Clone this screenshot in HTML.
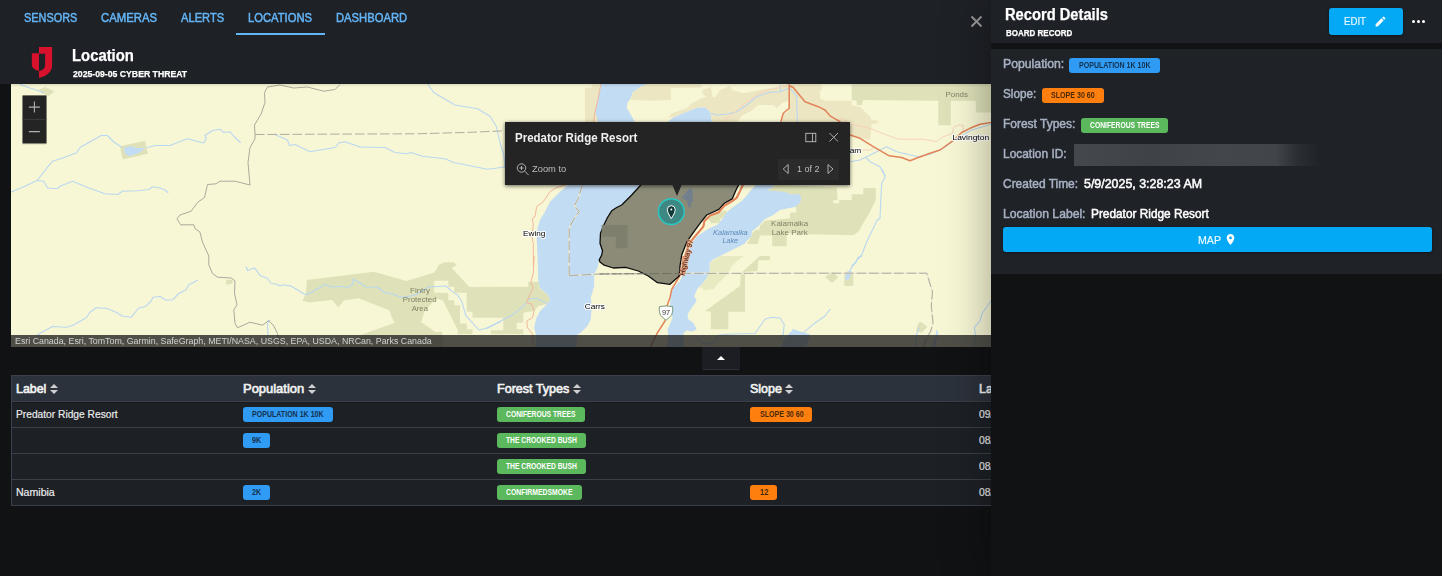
<!DOCTYPE html>
<html lang="en">
<head>
<meta charset="utf-8">
<title>Location</title>
<style>
*{box-sizing:border-box;margin:0;padding:0}
html,body{width:1442px;height:576px;overflow:hidden;background:#111214;font-family:"Liberation Sans",sans-serif}
#app{position:relative;width:1442px;height:576px;overflow:hidden;background:#111214}
.t{position:absolute;white-space:pre;line-height:20px;transform-origin:0 50%;display:block}
.med{-webkit-text-stroke:0.5px currentColor}
.reg{-webkit-text-stroke:0.2px currentColor}
.bld{-webkit-text-stroke:0.25px currentColor}
.hdt{-webkit-text-stroke:0.65px currentColor}
.abs{position:absolute}
header.top{will-change:transform;position:absolute;left:0;top:0;width:1442px;height:84px;background:#1e2126}
nav.tabs{position:absolute;left:0;top:0;width:991px;height:36px}
.ink{position:absolute;left:236px;top:33px;width:89px;height:2px;background:#64b5f6}
.titlebar{position:absolute;left:0;top:36px;width:991px;height:48px}
.closex{position:absolute;left:970px;top:15px;width:13px;height:13px}
#map{will-change:transform;position:absolute;left:11px;top:84px;width:980px;height:263px;overflow:hidden;background:#f8f7d5}
#map svg{position:absolute;left:0;top:0}
.mshade{position:absolute;left:0;top:0;width:980px;height:3px;background:linear-gradient(rgba(0,0,0,.12),rgba(0,0,0,0))}
.zoomctl{position:absolute;left:11.4px;top:11.4px;width:24.1px;height:48px;background:#242424;box-shadow:0 1px 2px rgba(0,0,0,.3)}
.zoomctl b{position:absolute;left:0;top:23.6px;width:24.1px;height:1px;background:#3c3c3c}
.attr{position:absolute;left:0;top:251px;width:980px;height:12px;background:rgba(36,36,36,.8)}
.popup{position:absolute;left:494px;top:38.25px;width:345px;height:62.3px;background:#242424;box-shadow:0 1px 4px rgba(0,0,0,.6)}
.popup .ptr{position:absolute;left:167.3px;top:62px;width:0;height:0;border-left:5.2px solid transparent;border-right:5.2px solid transparent;border-top:12.6px solid #242424}
.popup .pager{position:absolute;left:273px;top:36.8px;width:61px;height:21.2px;background:#2b2b2b}
.toggle{position:absolute;left:702px;top:347px;width:38px;height:23px;background:#1c1e23;border-bottom:1px solid #2c2f35;border-radius:0 0 2px 2px}
.toggle i{position:absolute;left:15px;top:9px;width:0;height:0;border-left:4.5px solid transparent;border-right:4.5px solid transparent;border-bottom:4.5px solid #fff}
.grid{position:absolute;left:11px;top:375px;width:1420px;height:131px;background:#1d2025;border:1px solid #3a4049}
.grid .hd{position:absolute;left:0;top:0;width:100%;height:25px;background:#2c323b;box-shadow:0 2px 0 #191b1f}
.grid .ln{position:absolute;left:0;width:100%;height:1px;background:#3a4049}
.chip{position:absolute;height:15px;border-radius:3px}
.c-b{background:#2f9bf4}.c-g{background:#5cb85c}.c-o{background:#ff7f0e}
.sort{position:absolute;width:8px;height:11px}
.sort:before,.sort:after{content:"";position:absolute;left:0;width:0;height:0;border-left:4px solid transparent;border-right:4px solid transparent}
.sort:before{top:0;border-bottom:4.5px solid #cfcfcf}
.sort:after{top:6px;border-top:4.5px solid #cfcfcf}
aside.panel{will-change:transform;position:absolute;left:991px;top:0;width:451px;height:576px;background:#111214;box-shadow:0 0 44px rgba(0,0,0,.36)}
.phead{position:absolute;left:0;top:0;width:451px;height:43px;background:#1e2126}
.pbody{position:absolute;left:0;top:49px;width:451px;height:225px;background:#1f2227}
.btn{position:absolute;background:#03a9f4;border-radius:3px;box-shadow:0 1px 3px rgba(0,0,0,.4)}
.redact{position:absolute;left:83px;top:95px;width:246px;height:22px;background:linear-gradient(90deg,#45494d 0%,#3f4347 30%,#43474b 60%,#414549 82%,rgba(50,53,58,.6) 91%,rgba(31,34,39,0) 100%)}
.dots{position:absolute;left:421px;top:20px;width:13px;height:4px}
.dots i{position:absolute;top:0;width:3.4px;height:3.4px;border-radius:50%;background:#fff}

</style>
</head>
<body>
<div id="app">
<header class="top">
<nav class="tabs">
<span class="t med" style="left:24.09px;top:8px;font-size:12.8px;font-weight:400;color:#64b5f6;transform:scaleX(0.8522);">SENSORS</span>
<span class="t med" style="left:101.17px;top:8px;font-size:12.8px;font-weight:400;color:#64b5f6;transform:scaleX(0.8855);">CAMERAS</span>
<span class="t med" style="left:181.27px;top:8px;font-size:12.8px;font-weight:400;color:#64b5f6;transform:scaleX(0.8705);">ALERTS</span>
<span class="t med" style="left:247.98px;top:8px;font-size:12.8px;font-weight:400;color:#64b5f6;transform:scaleX(0.8771);">LOCATIONS</span>
<span class="t med" style="left:335.98px;top:8px;font-size:12.8px;font-weight:400;color:#64b5f6;transform:scaleX(0.8770);">DASHBOARD</span>
<div class="ink"></div>
</nav>
<div class="titlebar" style="top:0;height:84px">
<svg class="abs" style="left:30px;top:44px" width="24" height="36" viewBox="30 44 24 36">
<path d="M38.96 46.9H52.1V65.2Q52.1 74.4 38.96 78V70.96Q45.1 69.8 45.1 65.2V53.76H38.96Z" fill="#d8112d"/>
<path d="M31.85 53.15H38.35L38.96 53.76V70.96Q31.85 69.05 31.85 65.2Z" fill="#d8112d"/>
</svg>
<span class="t bld" style="left:72.35px;top:46px;font-size:15.8px;font-weight:700;color:#fff;transform:scaleX(0.9396);">Location</span>
<span class="t bld" style="left:73.21px;top:64px;font-size:9.9px;font-weight:700;color:#fff;transform:scaleX(0.8789);">2025-09-05 CYBER THREAT</span>
</div>
<svg class="closex" viewBox="0 0 13 13"><path d="M1.5 1.5L11.5 11.5M11.5 1.5L1.5 11.5" stroke="#9a9a9a" stroke-width="1.9" fill="none"/></svg>
</header>

<section id="map">
<svg width="980" height="263" viewBox="11 84 980 263" font-family="'Liberation Sans',sans-serif">
<rect x="11" y="84" width="980" height="263" fill="#f8f7d5"/>
<g fill="#dfe2b9">
<path d="M38.8 89.5 L45.0 87.0 L54.5 91.2 L48.8 96.2 L41.2 92.5Z"/>
<path d="M120.0 146.2 L145.0 140.8 L148.0 153.8 L122.5 159.5Z"/>
<path d="M306.8 280.1 L373.9 271.7 L406.7 281.1 L434.4 272.4 L438.8 265.1 L444.6 262.2 L453.3 262.2 L457.0 265.1 L451.9 268.0 L469.4 287.0 L528.3 286.8 L528.3 281.8 L538.3 281.8 L540.0 288.5 L548.3 295.2 L550.0 300.2 L546.7 304.3 L538.3 306.0 L534.2 311.0 L523.3 312.7 L523.3 322.7 L516.7 322.7 L516.7 329.3 L523.3 329.3 L523.3 334.3 L490.8 334.3 L490.8 330.2 L503.3 330.2 L503.3 317.7 L472.5 317.7 L472.5 311.8 L466.7 311.8 L466.7 292.7 L454.2 292.7 L454.2 286.8 L448.3 286.8 L448.3 280.7 L434.2 280.7 L434.2 292.7 L448.3 292.7 L448.3 300.2 L454.2 300.2 L454.2 305.2 L460.0 305.2 L460.0 323.5 L466.7 323.5 L466.7 329.3 L472.5 329.3 L472.5 334.3 L457.5 334.3 L457.7 334.7 L457.7 330.0 L443.1 300.8 L437.3 298.6 L435.8 299.4 L424.9 310.3 L421.2 322.0 L435.8 332.2 L441.7 331.5 L442.4 334.7 L443.1 347.5 L348.3 347.5 L361.5 334.7 L395.0 322.7 L392.1 318.3 L389.2 310.3 L358.5 298.2 L344.0 300.5 L338.1 307.4 L332.3 300.1 L309.0 302.6 L302.4 300.8 L306.0 293.5Z"/>
<path d="M226.2 279.8 L232.5 279.8 L232.5 283.5 L226.2 284.8Z"/>
<path d="M836.7 187.5 L837.5 200.0 L833.3 200.3 L833.3 203.3 L839.2 203.3 L839.2 200.0 L851.7 200.0 L851.7 194.2 L863.3 194.2 L863.3 188.0 L875.8 188.0 L875.8 200.0 L868.3 215.0 L863.3 223.3 L858.3 231.7 L853.3 235.3 L808.3 234.2 L787.5 233.3 L786.7 233.3 L786.7 246.3 L772.2 246.3 L772.2 235.6 L760.0 235.6 L757.8 244.0 L746.7 244.0 L751.1 236.7 L752.2 233.3 L755.6 230.0 L759.4 229.4 L760.0 225.6 L765.6 220.6 L790.0 218.3 L790.0 212.8 L796.7 212.2 L795.6 206.7 L801.3 197.8 L791.1 194.4 L766.7 190.6 L772.2 187.8 L774.4 184.4Z"/>
<path d="M707.8 217.8 L725.6 210.0 L726.7 212.2 L723.3 217.8 L720.0 218.9 L720.0 222.2 L716.7 223.3 L711.1 223.3Z"/>
<path d="M770.0 256.0 L770.0 260.2 L758.3 260.2 L757.5 271.0 L745.0 271.8 L745.0 311.8 L728.3 311.8 L728.3 329.3 L710.8 329.3 L710.8 311.8 L705.0 311.0 L740.0 286.0 L740.8 274.3 L743.3 271.0 L760.0 256.0Z"/>
<path d="M851.7 84.2 L991.3 84.2 L991.3 112.5 L975.8 112.5 L975.8 100.8 L950.8 100.8 L950.8 125.3 L938.3 125.3 L938.3 100.8 L863.3 100.0 L861.7 105.0 L856.7 105.0 L856.7 100.8 L851.7 100.0Z"/>
<path d="M832.0 271.3 L838.3 277.2 L832.0 283.0 L825.3 277.2Z"/>
<path d="M844.2 274.3 L853.3 274.3 L853.3 286.0 L844.2 286.0Z"/>
<path d="M920.8 321.8 L927.5 326.8 L921.7 332.7 L915.8 331.0 L918.3 322.7Z"/>
</g>
<g fill="#e8ebc2">
<path d="M709.2 263.5 L720.0 256.0 L743.3 256.0 L731.7 266.0 L728.3 272.7 L713.3 289.3 L705.0 290.2 L699.2 286.8 L706.7 277.7 L710.0 270.2Z"/>
</g>
<g fill="#ede6c2">
<path d="M585.0 87.5 L591.7 87.5 L591.7 84.2 L601.7 84.2 L600.0 122.5 L585.0 122.5Z"/>
<path d="M630.8 100.0 L632.5 92.5 L638.3 88.3 L646.7 84.2 L701.7 84.2 L701.7 87.5 L670.8 88.3 L670.8 100.0 L651.7 100.8Z"/>
<path d="M702.5 90.0 L710.8 86.7 L712.5 96.7 L715.0 97.5 L720.0 90.0 L730.8 85.8 L731.7 90.0 L743.3 93.3 L776.7 86.7 L788.3 84.2 L820.0 84.2 L822.5 87.5 L820.0 91.7 L820.0 98.3 L825.0 100.8 L851.7 100.8 L851.7 105.8 L860.0 106.7 L870.0 116.7 L871.7 120.0 L878.3 120.8 L877.5 123.3 L871.7 124.2 L870.0 140.0 L858.3 138.3 L850.0 135.0 L850.0 122.5 L733.3 122.5 L712.0 122.5 L710.8 115.0 L709.2 110.8 L705.0 107.5 L698.3 107.5 L686.7 111.7 L673.3 117.5 L668.3 117.5 L671.7 113.3 L686.7 108.3 L691.7 103.3 L701.7 98.3 L706.7 96.7 L702.5 94.2Z"/>
</g>
<g fill="#f8f7d5">
<path d="M758.3 105.0 L773.3 105.0 L776.7 108.3 L781.7 103.3 L788.3 100.8 L788.3 111.7 L783.3 114.2 L780.8 122.5 L736.7 122.5 L741.7 115.8 L751.7 110.8Z"/>
</g>
<g fill="#c2dcf3">
<path d="M600.8 84.0 L599.0 93.3 L596.7 103.3 L595.5 113.3 L597.5 119.0 L599.0 125.0 L590.0 170.0 L568.3 184.7 L560.0 191.7 L550.0 201.7 L545.0 211.7 L540.0 220.0 L537.5 228.3 L536.7 240.0 L537.5 256.0 L538.3 281.0 L540.0 288.0 L548.3 295.2 L550.0 300.0 L546.7 304.5 L540.0 311.0 L536.0 319.0 L534.2 327.7 L535.8 334.3 L535.8 347.0 L576.7 347.0 L576.7 335.2 L581.7 331.8 L587.5 326.0 L590.8 319.3 L591.7 306.0 L590.8 297.7 L594.2 286.0 L594.2 274.3 L597.5 267.7 L599.2 260.0 L601.7 255.0 L602.5 250.8 L600.0 243.3 L600.5 233.3 L604.2 224.2 L607.5 217.5 L611.7 210.8 L616.7 207.5 L621.7 205.0 L631.7 195.0 L641.7 184.7 L640.0 150.0 L635.0 122.5 L633.3 119.0 L630.0 113.3 L626.7 107.5 L627.5 102.5 L630.8 98.3 L632.5 92.5 L638.3 88.3 L646.7 84.0Z"/>
<path d="M665.0 124.0 L673.3 117.5 L686.7 111.7 L698.3 107.5 L705.0 107.5 L709.0 110.8 L710.8 115.0 L712.0 124.0Z"/>
<path d="M756.7 184.0 L751.1 190.0 L746.7 195.6 L742.2 200.6 L732.2 207.8 L726.7 212.2 L723.3 217.8 L717.8 224.4 L707.8 228.9 L696.7 236.7 L691.1 244.0 L689.0 250.0 L687.5 256.0 L684.0 262.0 L683.3 272.7 L680.0 281.0 L673.3 287.7 L670.8 294.3 L670.0 306.0 L672.5 317.7 L670.0 324.3 L667.5 329.3 L668.3 335.0 L666.7 347.0 L684.0 347.0 L683.3 333.5 L686.7 330.2 L691.7 331.8 L696.7 329.3 L693.3 322.7 L688.3 319.3 L687.5 314.3 L691.7 307.7 L696.7 301.0 L694.2 296.0 L697.5 288.5 L701.7 284.3 L706.7 277.7 L710.0 270.2 L709.2 263.5 L713.3 259.3 L720.0 256.0 L727.0 252.5 L735.0 248.5 L744.4 244.0 L746.7 241.1 L751.1 236.7 L752.2 231.1 L757.8 226.7 L764.4 219.4 L772.2 215.6 L780.0 210.0 L795.6 206.7 L800.0 202.8 L801.3 197.8 L799.4 194.2 L791.1 194.4 L784.4 191.7 L766.7 190.6 L772.2 187.8 L774.4 184.0Z"/>
<path d="M123.8 147.5 L131.2 146.2 L136.2 148.0 L145.0 148.0 L140.0 152.5 L130.0 156.2 L125.0 153.8Z"/>
<path d="M845.0 279.3 L846.7 271.8 L850.8 270.2 L851.7 272.7 L848.3 280.2Z"/>
<path d="M792.5 329.0 L807.5 334.0 L803.3 346.8 L783.3 346.8 L792.5 334.3Z"/>
<path d="M936.7 329.0 L938.3 332.7 L935.0 346.8 L931.7 346.8 L935.8 334.3Z"/>
<path d="M793.3 329.3 L800.0 331.8 L810.0 334.3 L806.7 346.8 L781.7 346.8 L783.3 339.3Z"/>
</g>
<g fill="none" stroke="#b9d7f0" stroke-width="1.1" stroke-linejoin="round" stroke-linecap="round">
<path d="M20.0 84.5 L30.0 88.0 L40.0 91.2 L43.8 93.0"/>
<path d="M11.2 192.0 L25.0 186.2 L37.0 180.5 L52.5 161.2 L62.5 158.0 L76.2 153.0 L80.0 147.5 L101.2 135.5 L107.5 135.5 L113.8 142.0 L121.2 147.0"/>
<path d="M147.5 147.5 L155.0 145.5 L170.0 145.5 L187.5 138.8 L203.8 143.0 L206.2 138.8 L205.0 135.5 L212.5 130.5 L220.0 129.2 L223.8 132.5 L230.0 131.8 L235.0 137.5 L240.5 142.5"/>
<path d="M37.0 180.5 L43.8 181.2 L47.5 188.0 L57.5 188.8 L60.0 186.2 L72.5 181.2 L87.5 187.5 L105.0 193.8 L117.5 194.5 L122.5 191.2 L137.5 190.8 L148.8 189.5 L152.5 186.8 L160.0 188.0 L165.0 190.0 L168.0 192.5"/>
<path d="M275.0 134.5 L287.5 140.0 L289.5 145.5 L295.0 144.5 L310.0 151.8 L335.0 147.5 L338.8 143.0 L345.0 141.8 L360.0 147.0"/>
<path d="M37.5 334.8 L52.5 326.5 L66.2 327.2 L72.5 325.5 L86.2 317.8 L90.0 312.2 L96.2 307.8 L107.5 308.5 L117.5 313.0 L121.8 316.0 L131.2 317.2 L138.8 308.0 L145.0 306.8 L151.2 301.0 L153.0 297.2 L160.0 296.5 L166.2 300.2 L172.5 299.8 L178.8 293.5 L186.2 289.8 L188.8 284.8 L197.5 280.2"/>
<path d="M246.2 266.8 L247.5 270.5 L254.5 267.8 L260.0 275.2 L267.5 278.5 L271.2 283.5 L276.2 284.0 L280.0 286.0 L283.8 284.8 L290.0 286.0"/>
<path d="M290.0 285.5 L304.6 294.3 L308.2 294.3 L325.0 284.5 L332.3 287.3 L338.1 286.2 L348.3 287.3 L352.7 284.1 L353.4 279.0 L365.8 287.0 L377.5 287.3 L384.8 292.8 L390.6 293.5 L402.3 297.6 L415.4 295.0 L428.5 287.0 L446.0 286.0 L451.9 291.4 L457.7 295.0 L462.1 302.3 L465.7 315.4 L478.9 330.0 L485.4 328.5 L500.0 322.0"/>
<path d="M268.0 334.8 L267.5 323.5 L269.5 320.5"/>
<path d="M427.5 83.8 L433.8 92.5 L440.0 96.2 L455.0 105.0 L477.5 108.8 L490.0 116.2 L496.2 126.2 L500.0 142.5 L503.8 155.0 L505.0 167.5"/>
<path d="M360.0 147.0 L385.0 147.5 L395.0 152.5 L406.2 153.8 L411.2 152.5 L422.5 156.2 L445.0 158.8 L453.8 162.5 L487.5 169.2 L505.0 167.0"/>
<path d="M486.7 328.5 L513.3 314.3 L523.3 306.0 L530.0 298.5 L536.7 298.5 L546.7 303.5"/>
<path d="M710.8 113.3 L716.7 115.0 L726.7 114.2 L736.7 111.7 L746.7 105.0 L756.7 96.7 L768.3 92.5 L780.0 91.7 L788.3 88.3"/>
<path d="M780.0 85.0 L780.8 91.7"/>
<path d="M790.0 88.3 L796.7 95.8 L796.7 105.0 L797.5 121.7"/>
<path d="M850.0 161.7 L860.0 160.0 L866.7 156.7 L886.7 146.7 L896.7 151.7 L918.3 156.7 L930.0 154.2 L943.3 148.3 L953.3 140.8 L971.7 130.0 L991.3 124.2"/>
<path d="M865.8 157.5 L870.0 161.7 L880.0 166.7 L885.0 175.8"/>
<path d="M882.5 170.0 L885.3 176.7 L881.7 183.3 L880.8 200.0 L880.0 218.3 L876.7 220.8 L873.3 228.3 L866.7 241.7 L861.7 255.0 L857.5 258.3 L855.8 262.5 L851.7 265.8"/>
<path d="M861.7 256.0 L858.3 258.5 L853.3 265.2 L850.0 270.2"/>
<path d="M830.0 309.3 L825.0 316.0 L813.3 324.3 L803.3 332.7"/>
<path d="M991.3 300.2 L981.7 314.3 L980.0 321.0 L974.2 327.7 L975.8 336.0 L973.3 346.8"/>
<path d="M919.2 327.7 L916.7 334.3 L915.8 346.8"/>
<path d="M695.0 336.0 L701.7 342.7 L708.3 344.3 L715.0 341.0 L718.3 335.2 L726.7 334.3 L755.0 333.5 L765.0 319.3 L771.7 317.3 L780.0 318.0 L784.2 324.3 L783.3 334.3 L780.0 337.7"/>
</g>
<g fill="none" stroke="#aca89c" stroke-width="1" stroke-linejoin="round">
<path d="M340.0 84.5 L335.0 89.5 L323.8 91.2 L307.5 87.0 L293.8 88.0 L280.0 85.0 L267.5 87.0 L264.5 92.5 L265.0 102.5 L261.2 113.8 L254.5 125.0 L255.0 134.5 L255.0 138.8 L250.0 147.5 L248.0 162.5 L250.0 185.0 L235.0 181.2 L220.0 181.2 L216.2 183.8 L207.5 184.5 L204.5 197.5 L197.5 202.5 L191.2 211.2 L180.0 215.0 L177.0 218.8 L180.0 223.8"/>
<path d="M180.0 224.8 L193.8 224.8 L195.0 228.5 L200.0 232.2 L202.5 242.2 L208.8 256.0 L208.8 264.8 L212.5 273.5 L217.5 277.2 L231.2 278.0 L235.0 281.0 L234.5 293.5 L237.0 304.8 L233.8 309.8 L235.0 323.5 L237.5 327.8 L250.0 322.2 L262.5 325.2 L268.8 320.5 L273.8 326.0 L277.5 333.5 L280.0 347.2"/>
</g>
<g fill="none" stroke="#ece9d4" stroke-width="1.6" stroke-linejoin="round">
<path d="M582.5 184.7 L578.3 198.3 L574.2 205.8 L579.2 211.3 L573.3 220.0 L569.2 228.3 L569.2 275.8"/>
<path d="M569.2 275.7 L599.2 274.0 L680.0 273.5 L800.0 273.2 L926.7 273.2 L932.5 291.8 L931.3 306.0 L933.0 322.7 L930.8 331.0 L925.0 341.0 L924.2 346.8"/>
</g>
<g fill="none" stroke="#a7a398" stroke-width=".9" stroke-dasharray="9.5 3" stroke-linejoin="round">
<path d="M255.0 134.5 L360.0 134.0 L415.0 133.8 L465.0 132.5 L505.0 130.8"/>
<path d="M582.5 184.7 L578.3 198.3 L574.2 205.8 L579.2 211.3 L573.3 220.0 L569.2 228.3 L569.2 275.8"/>
<path d="M569.2 275.7 L599.2 274.0 L680.0 273.5 L800.0 273.2 L926.7 273.2 L932.5 291.8 L931.3 306.0 L933.0 322.7 L930.8 331.0 L925.0 341.0 L924.2 346.8"/>
</g>
<g fill="none" stroke="#f6d3bd" stroke-width="1" stroke-linejoin="round">
<path d="M838.3 119.2 L843.3 118.7 L850.0 124.2 L870.0 128.3 L886.7 135.0 L898.3 139.2 L923.3 139.2 L936.7 141.7 L941.7 137.5 L952.5 133.3 L953.3 127.5 L958.3 125.0 L963.3 125.3 L963.3 130.0"/>
<path d="M850.0 150.0 L871.7 150.0 L872.5 147.5"/>
<path d="M720.8 122.5 L733.3 113.3 L745.0 103.3 L756.7 95.0 L768.3 90.0 L780.0 87.5 L789.2 85.8"/>
</g>
<g fill="none" stroke="#f2b79a" stroke-width="1" stroke-linejoin="round">
<path d="M600.8 84.2 L597.5 101.7 L595.0 111.7 L593.3 122.5"/>
<path d="M566.7 184.7 L556.7 187.5 L550.0 191.7 L543.3 201.7 L536.7 206.7 L535.0 216.7 L532.5 218.3 L533.3 225.0 L531.7 236.7 L533.3 243.3 L533.3 265.8"/>
<path d="M534.2 256.0 L533.3 272.7 L530.8 282.7 L533.3 287.7 L529.2 296.0 L526.7 302.7 L531.7 304.3 L534.2 311.0 L532.5 317.7 L526.7 321.0 L527.5 327.7 L532.5 334.3 L533.3 346.8"/>
</g>
<g fill="none" stroke="#e2845a" stroke-width="1.5" stroke-linejoin="round">
<path d="M789.2 84.2 L789.2 108.3 L783.3 113.3 L780.8 121.7"/>
<path d="M789.2 85.8 L793.3 87.5 L796.7 91.7 L805.0 101.7 L818.3 106.7 L825.0 110.0 L830.0 115.8 L840.0 121.7 L850.0 135.0 L860.0 138.3 L873.3 146.7 L889.2 155.8 L901.7 157.5 L910.0 160.8 L918.3 157.5 L930.0 153.3 L940.0 150.0 L951.7 141.7 L961.7 132.5 L970.0 128.3 L980.0 124.2 L991.3 122.5"/>
<path d="M743.3 184.0 L740.0 191.1 L736.7 197.8 L732.2 201.1 L724.4 205.6 L718.9 212.2 L710.0 215.6 L704.4 221.1 L703.3 226.7 L696.7 234.4 L691.1 241.1 L688.9 244.0 L686.7 251.1 L685.0 256.7"/>
<path d="M683.3 256.0 L681.7 272.7 L676.7 281.0 L671.7 289.3 L670.0 297.7 L667.5 304.3 L665.0 321.0 L657.5 332.7 L653.3 341.0 L650.8 346.8"/>
</g>
<path d="M641.7 184.0 L631.7 195.0 L621.7 205.0 L616.7 207.5 L611.7 210.8 L607.5 217.5 L604.2 224.2 L600.5 233.3 L600.0 243.3 L602.5 250.8 L601.7 255.0 L599.2 260.0 L600.0 262.0 L604.2 265.2 L613.3 268.0 L625.8 267.3 L638.3 271.0 L648.3 276.0 L657.5 282.7 L670.0 284.3 L679.2 276.0 L680.0 266.0 L681.7 255.0 L686.7 242.2 L691.1 235.6 L700.0 223.3 L706.7 215.0 L718.9 209.4 L724.4 203.3 L732.2 198.9 L735.6 191.1 L738.9 184.0 L738.0 160.0 L650.0 160.0Z" fill="#8b8b78" stroke="#0d0d0d" stroke-width="1.3" stroke-linejoin="round"/>
<path d="M601.7 225H627.5V248.3H615.8V236.7H601.7Z" fill="#7f7f6d"/>
<path d="M681.7 197.8 L690.0 187.8 L692.8 191.1 L692.2 196.7 L693.3 200.0 L690.6 203.9 L691.1 207.8 L688.3 206.7 L687.2 201.1Z" fill="#71808c"/>
<path d="M599.5 274.0 L640.0 273.7 L680.5 273.5" fill="none" stroke="#6c6c60" stroke-width=".9" stroke-dasharray="9.5 3"/>
<path d="M743.3 184.0 L740.0 191.1 L736.7 197.8 L732.2 201.1 L724.4 205.6 L718.9 212.2 L710.0 215.6 L704.4 221.1 L703.3 226.7 L696.7 234.4 L691.1 241.1 L688.9 244.0 L686.7 251.1 L685.0 256.7 L684.4 264.4 L683.9 268.9 L683.1 274.4" fill="none" stroke="#e2845a" stroke-width="2" stroke-linejoin="round"/>
<text x="534.2" y="235.8" font-size="8.1" fill="#000" text-anchor="middle" textLength="22.3" lengthAdjust="spacingAndGlyphs" stroke="#fff" stroke-width="2.2" stroke-linejoin="round" paint-order="stroke" stroke-opacity=".9">Ewing</text>
<text x="594.8" y="309.0" font-size="8.1" fill="#000" text-anchor="middle" textLength="20.3" lengthAdjust="spacingAndGlyphs" stroke="#fff" stroke-width="2.2" stroke-linejoin="round" paint-order="stroke" stroke-opacity=".9">Carrs</text>
<text x="970.8" y="140.0" font-size="8.1" fill="#000" text-anchor="middle" textLength="36.7" lengthAdjust="spacingAndGlyphs" stroke="#fff" stroke-width="2.2" stroke-linejoin="round" paint-order="stroke" stroke-opacity=".9">Lavington</text>
<text x="840.0" y="152.5" font-size="8.1" fill="#000" text-anchor="middle" textLength="42.6" lengthAdjust="spacingAndGlyphs" stroke="#fff" stroke-width="2.2" stroke-linejoin="round" paint-order="stroke" stroke-opacity=".9">Coldstream</text>
<text x="956.7" y="97.3" font-size="8.1" fill="#808266" text-anchor="middle" textLength="22.5" lengthAdjust="spacingAndGlyphs">Ponds</text>
<text x="420.0" y="292.8" font-size="8.1" fill="#808266" text-anchor="middle" textLength="20.0" lengthAdjust="spacingAndGlyphs">Fintry</text>
<text x="419.7" y="301.8" font-size="8.1" fill="#808266" text-anchor="middle" textLength="33.8" lengthAdjust="spacingAndGlyphs">Protected</text>
<text x="419.8" y="310.7" font-size="8.1" fill="#808266" text-anchor="middle" textLength="16.3" lengthAdjust="spacingAndGlyphs">Area</text>
<text x="789.7" y="225.7" font-size="8.1" fill="#808266" text-anchor="middle" textLength="37.2" lengthAdjust="spacingAndGlyphs">Kalamalka</text>
<text x="789.7" y="234.7" font-size="8.1" fill="#808266" text-anchor="middle" textLength="36.1" lengthAdjust="spacingAndGlyphs">Lake Park</text>
<text x="730.4" y="234.7" font-size="8.1" fill="#5b88b8" text-anchor="middle" textLength="34.7" lengthAdjust="spacingAndGlyphs" font-style="italic">Kalamalka</text>
<text x="730.3" y="242.9" font-size="8.1" fill="#5b88b8" text-anchor="middle" textLength="15.5" lengthAdjust="spacingAndGlyphs" font-style="italic">Lake</text>
<text font-size="7.4" fill="#2e1a14" stroke="#f0a582" stroke-width="1.1" paint-order="stroke" transform="translate(684.2 276) rotate(-76)" textLength="37" lengthAdjust="spacingAndGlyphs">Highway 97</text>
<path d="M659.4 306.6Q666 305.2 672.6 306.600Q673.4 311 671.6 315.200L666 320.3L660.4 315.200Q658.6 311 659.4 306.600Z" fill="#fff" stroke="#7c9a80" stroke-width="1" stroke-linejoin="round"/>
<text x="666" y="315" font-size="7.4" fill="#333" text-anchor="middle">97</text>
<circle cx="671.3" cy="211.6" r="12.9" fill="#3e8883" stroke="#27c9c3" stroke-width="1.4"/>
<path d="M671.3 218.6C669.3 215.2 667.4 212.6 667.4 209.6a3.9 3.9 0 0 1 7.8 0C675.2 212.6 673.300 215.2 671.3 218.6Z" fill="#0f3a39" stroke="#fff" stroke-width="1"/>
<circle cx="671.3" cy="209.5" r="1" fill="#fff"/>
</svg>
<div class="mshade"></div>
<svg class="abs zoomsvg" style="left:0;top:0" width="60" height="70" viewBox="11 84 60 70">
<rect x="22.5" y="96.4" width="24" height="48" fill="#000" opacity=".18"/>
<rect x="22.5" y="95.4" width="24" height="48" fill="#242424"/>
<path d="M22.500 119.4H46.5" stroke="#3c3c3c" stroke-width="1" fill="none"/>
<path d="M28.9 107.1H39.9M34.4 101.6V112.6M28.9 131.600H39.9" stroke="#b0b0b0" stroke-width="1.1" fill="none"/>
</svg>
<div class="attr">
<span class="t " style="left:3.97px;top:-4px;font-size:9.2px;font-weight:400;color:#d2d2d2;transform:scaleX(0.9609);">Esri Canada, Esri, TomTom, Garmin, SafeGraph, METI/NASA, USGS, EPA, USDA, NRCan, Parks Canada</span>
</div>
<div class="popup">
<div class="ptr"></div>
<div class="pager"></div>
<span class="t " style="left:9.94px;top:6px;font-size:12.2px;font-weight:700;color:#f0f0f0;transform:scaleX(0.9454);">Predator Ridge Resort</span>
<span class="t " style="left:26.86px;top:37px;font-size:9.8px;font-weight:400;color:#bdbdbd;transform:scaleX(0.9515);">Zoom to</span>
<span class="t " style="left:292.45px;top:37px;font-size:9.8px;font-weight:400;color:#bdbdbd;transform:scaleX(0.9182);">1 of 2</span>
<svg class="abs" style="left:0;top:0" width="345" height="62" viewBox="0 0 345 62">
<g fill="none" stroke="#bdbdbd" stroke-width=".9">
<circle cx="16.5" cy="46" r="4.2"/><path d="M19.6 49.1L23.6 53.1M14.5 46H18.5M16.5 44V48"/>
<rect x="300.8" y="11.3" width="10" height="8.4"/><path d="M307.5 11.3V19.7"/>
<path d="M324.5 11L333 19.5M333 11L324.5 19.5"/>
<path d="M283.2 42.5V51.5L278.2 47Z"/><path d="M323 42.5V51.5L328 47Z"/>
</g>
</svg>
</div>
</section>

<div class="toggle"><i></i></div>

<section class="grid">
<div class="hd"></div>
<div class="ln" style="top:25px"></div>
<div class="ln" style="top:51px"></div>
<div class="ln" style="top:77px"></div>
<div class="ln" style="top:103px"></div>
<i class="sort" style="left:38px;top:8px"></i>
<i class="sort" style="left:296px;top:8px"></i>
<i class="sort" style="left:561px;top:8px"></i>
<i class="sort" style="left:773.4px;top:8px"></i>
<div class="chip c-b" style="left:231px;top:31px;width:90px"></div>
<div class="chip c-b" style="left:231px;top:57px;width:27px"></div>
<div class="chip c-b" style="left:231px;top:109px;width:27px"></div>
<div class="chip c-g" style="left:485px;top:31px;width:87.5px"></div>
<div class="chip c-g" style="left:485px;top:57px;width:89px"></div>
<div class="chip c-g" style="left:485px;top:83px;width:89px"></div>
<div class="chip c-g" style="left:485px;top:109px;width:85px"></div>
<div class="chip c-o" style="left:738.2px;top:31px;width:62px"></div>
<div class="chip c-o" style="left:738.2px;top:109px;width:26.6px"></div>
<span class="t hdt" style="left:3.97px;top:3px;font-size:13.1px;font-weight:400;color:#f2f2f2;transform:scaleX(0.9479);">Label</span>
<span class="t hdt" style="left:231.36px;top:3px;font-size:13.1px;font-weight:400;color:#f2f2f2;transform:scaleX(0.9883);">Population</span>
<span class="t hdt" style="left:485.17px;top:3px;font-size:13.1px;font-weight:400;color:#f2f2f2;transform:scaleX(0.9583);">Forest Types</span>
<span class="t hdt" style="left:737.88px;top:3px;font-size:13.1px;font-weight:400;color:#f2f2f2;transform:scaleX(0.9518);">Slope</span>
<span class="t hdt" style="left:966.58px;top:3px;font-size:13.1px;font-weight:400;color:#f2f2f2;transform:scaleX(0.9444);">Last Updated</span>
<span class="t reg" style="left:3.98px;top:28px;font-size:11.7px;font-weight:400;color:#ececec;transform:scaleX(0.8743);">Predator Ridge Resort</span>
<span class="t reg" style="left:3.96px;top:106px;font-size:11.7px;font-weight:400;color:#ececec;transform:scaleX(0.9032);">Namibia</span>
<span class="t reg" style="left:966.75px;top:28px;font-size:11.7px;font-weight:400;color:#ececec;transform:scaleX(0.8889);">09/05/2025</span>
<span class="t reg" style="left:966.75px;top:54px;font-size:11.7px;font-weight:400;color:#ececec;transform:scaleX(0.8889);">08/29/2025</span>
<span class="t reg" style="left:966.75px;top:80px;font-size:11.7px;font-weight:400;color:#ececec;transform:scaleX(0.8889);">08/28/2025</span>
<span class="t reg" style="left:966.75px;top:106px;font-size:11.7px;font-weight:400;color:#ececec;transform:scaleX(0.8889);">08/27/2025</span>
<span class="t " style="left:240.29px;top:29px;font-size:8.2px;font-weight:700;color:#16324d;transform:scaleX(0.8615);">POPULATION 1K 10K</span>
<span class="t " style="left:240.37px;top:55px;font-size:8.2px;font-weight:700;color:#16324d;transform:scaleX(0.8765);">9K</span>
<span class="t " style="left:240.40px;top:107px;font-size:8.2px;font-weight:700;color:#16324d;transform:scaleX(0.8739);">2K</span>
<span class="t " style="left:493.96px;top:29px;font-size:8.2px;font-weight:700;color:#fff;transform:scaleX(0.8250);">CONIFEROUS TREES</span>
<span class="t " style="left:494.47px;top:55px;font-size:8.2px;font-weight:700;color:#fff;transform:scaleX(0.8241);">THE CROOKED BUSH</span>
<span class="t " style="left:494.47px;top:81px;font-size:8.2px;font-weight:700;color:#fff;transform:scaleX(0.8241);">THE CROOKED BUSH</span>
<span class="t " style="left:494.16px;top:107px;font-size:8.2px;font-weight:700;color:#fff;transform:scaleX(0.8372);">CONFIRMEDSMOKE</span>
<span class="t " style="left:747.60px;top:29px;font-size:8.2px;font-weight:700;color:#4a2a08;transform:scaleX(0.8623);">SLOPE 30 60</span>
<span class="t " style="left:747.99px;top:107px;font-size:8.2px;font-weight:700;color:#4a2a08;transform:scaleX(0.9130);">12</span>
</section>

<aside class="panel">
<div class="phead">
<div class="btn" style="left:337.5px;top:8px;width:74.5px;height:26.5px"></div>
<svg class="abs" style="left:383px;top:15px" width="13" height="13" viewBox="0 0 24 24"><path fill="#fff" d="M3 17.25V21h3.75L17.81 9.94l-3.75-3.75L3 17.25zM20.71 7.04a1 1 0 0 0 0-1.41l-2.34-2.34a1 1 0 0 0-1.41 0l-1.83 1.83 3.75 3.75 1.83-1.83z"/></svg>
<div class="dots"><i style="left:0"></i><i style="left:4.8px"></i><i style="left:9.6px"></i></div>
<span class="t bld" style="left:14.35px;top:5px;font-size:15.6px;font-weight:700;color:#fff;transform:scaleX(0.9423);">Record Details</span>
<span class="t bld" style="left:15.15px;top:23px;font-size:8.9px;font-weight:700;color:#fff;transform:scaleX(0.9008);">BOARD RECORD</span>
<span class="t reg" style="left:352.80px;top:11px;font-size:11.4px;font-weight:400;color:#eaf8ff;transform:scaleX(0.8463);">EDIT</span>
</div>
<div class="pbody">
<div class="chip c-b" style="left:78.3px;top:9px;width:90.5px"></div>
<div class="chip c-o" style="left:51px;top:39px;width:61.5px"></div>
<div class="chip c-g" style="left:89.8px;top:69px;width:87.2px"></div>
<div class="redact"></div>
<div class="btn" style="left:12.3px;top:177.7px;width:428.5px;height:25.5px"></div>
<svg class="abs" style="left:233px;top:184px" width="13" height="13" viewBox="0 0 24 24"><path fill="#fff" d="M12 2C8.13 2 5 5.13 5 9c0 5.25 7 13 7 13s7-7.750 7-13c0-3.870-3.130-7-7-7zm0 9.500a2.500 2.500 0 0 1 0-5 2.500 2.500 0 0 1 0 5z"/></svg>
<span class="t med" style="left:11.95px;top:5px;font-size:12.4px;font-weight:400;color:#a7b1c2;transform:scaleX(0.9882);">Population:</span>
<span class="t med" style="left:12.07px;top:35px;font-size:12.4px;font-weight:400;color:#a7b1c2;transform:scaleX(0.9457);">Slope:</span>
<span class="t med" style="left:11.96px;top:65px;font-size:12.4px;font-weight:400;color:#a7b1c2;transform:scaleX(0.9658);">Forest Types:</span>
<span class="t med" style="left:11.96px;top:95px;font-size:12.4px;font-weight:400;color:#a7b1c2;transform:scaleX(0.9623);">Location ID:</span>
<span class="t med" style="left:12.17px;top:125px;font-size:12.4px;font-weight:400;color:#a7b1c2;transform:scaleX(0.9649);">Created Time:</span>
<span class="t med" style="left:11.95px;top:155px;font-size:12.4px;font-weight:400;color:#a7b1c2;transform:scaleX(0.9816);">Location Label:</span>
<span class="t med" style="left:93.43px;top:125px;font-size:12.4px;font-weight:400;color:#fff;transform:scaleX(1.0017);">5/9/2025, 3:28:23 AM</span>
<span class="t med" style="left:99.66px;top:155px;font-size:12.4px;font-weight:400;color:#fff;transform:scaleX(0.9555);">Predator Ridge Resort</span>
<span class="t " style="left:87.89px;top:7px;font-size:8.2px;font-weight:700;color:#16324d;transform:scaleX(0.8603);">POPULATION 1K 10K</span>
<span class="t " style="left:60.40px;top:37px;font-size:8.2px;font-weight:700;color:#4a2a08;transform:scaleX(0.8643);">SLOPE 30 60</span>
<span class="t " style="left:98.86px;top:67px;font-size:8.2px;font-weight:700;color:#fff;transform:scaleX(0.8250);">CONIFEROUS TREES</span>
<span class="t reg" style="left:207.16px;top:181px;font-size:11.6px;font-weight:400;color:#eaf8ff;transform:scaleX(0.9147);">MAP</span>
</div>
</aside>
</div>

</body>
</html>
